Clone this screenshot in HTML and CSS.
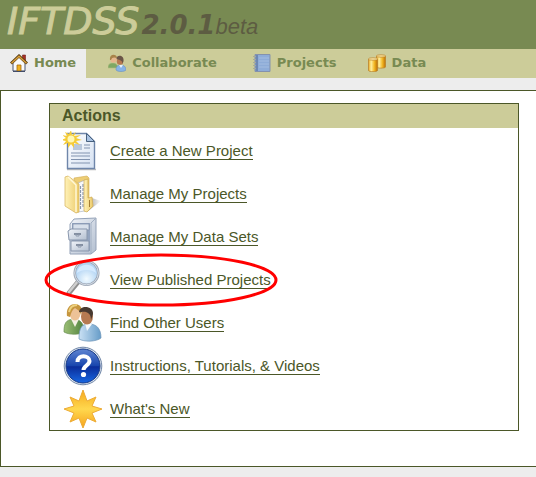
FILE: index.html
```html
<!DOCTYPE html>
<html lang="en">
<head>
<meta charset="utf-8">
<title>IFTDSS - Home</title>
<link rel="stylesheet" href="styles.css">
</head>
<body>
<header class="banner">
  <div class="brand"><span class="name">IFTDSS</span><span class="version">2.0.1</span><span class="stage">beta</span></div>
</header>
<nav class="tabs">
  <a class="tab active" href="#">
    <svg class="tab-icon" viewBox="0 0 18 18" aria-hidden="true">
      <path d="M12.500 1h3v6l-3-3z" fill="#a82f25" stroke="#6e2420" stroke-width=".6"/>
      <path d="M3 8.500 9 3l6 5.500V17H3z" fill="#fafafa" stroke="#4a5470"/>
      <path d="M1 9.500 9 2l8 7.500" fill="none" stroke="#5a3c12" stroke-width="3"/>
      <path d="M1.500 9.300 9 2.300l7.500 7" fill="none" stroke="#d9a13b" stroke-width="1.500"/>
      <path d="M7 11h4v6H7z" fill="#f2b21f" stroke="#a36b10" stroke-width=".8"/>
      <path d="M3 17.400h12" stroke="#39435f"/>
    </svg>Home</a>
  <a class="tab wide" href="#">
    <svg class="tab-icon" viewBox="0 0 18 18" aria-hidden="true">
      <path d="M0 14c0-4 2-5 5-5s5 2 5 5z" fill="#7fa864" stroke="#b1bd80" stroke-width=".6"/>
      <circle cx="5.500" cy="5.500" r="3.200" fill="#e6b68d"/>
      <path d="M2 6c-1-7 7-6 7-2C6 3 4 3 3 6z" fill="#a8834a"/>
      <path d="M8 16c0-4 2-5 5-5s5 2 5 5c-2 2-8 2-10 0z" fill="#86b3e6" stroke="#6c91bd" stroke-width=".6"/>
      <path d="m11 11 2 3 2-3z" fill="#e8f1fb"/>
      <circle cx="12" cy="7.500" r="3.200" fill="#b87950"/>
      <path d="M8.500 5c0-5 8-4 7 2l-1 3c0-3-2-4-6-5z" fill="#6a5547"/>
    </svg>Collaborate</a>
  <a class="tab" href="#">
    <svg class="tab-icon" viewBox="0 0 18 18" aria-hidden="true">
      <path d="M2 .5h15v17H2z" fill="#8eacd8" stroke="#8492ad"/>
      <path d="M2.500 1H5v16H2.500z" fill="#6d87b3"/>
      <path d="M6 4h10M6 7h10M6 10h10M6 13h10" stroke="#a3bce0"/>
      <path d="M0 2.500h3M0 5.500h3M0 8.500h3M0 11.500h3M0 14.500h3" stroke="#a5a99b"/>
    </svg>Projects</a>
  <a class="tab" href="#">
    <svg class="tab-icon" viewBox="0 0 18 18" aria-hidden="true">
      <defs><linearGradient id="gold"><stop offset="0" stop-color="#e8a71f"/><stop offset=".3" stop-color="#fff0a0"/><stop offset=".65" stop-color="#f3b824"/><stop offset="1" stop-color="#bb6e04"/></linearGradient></defs>
      <path d="M8.500 2v11c0 1.500 9 1.500 9 0V2z" fill="url(#gold)" stroke="#b78028" stroke-width=".7"/>
      <ellipse cx="13" cy="2" rx="4.500" ry="1.200" fill="#f8e29a" stroke="#b78028" stroke-width=".7"/>
      <path d="M.5 5v11.500c0 1.500 9 1.500 9 0V5z" fill="url(#gold)" stroke="#b78028" stroke-width=".7"/>
      <ellipse cx="5" cy="5" rx="4.500" ry="1.200" fill="#fbe8a8" stroke="#b78028" stroke-width=".7"/>
    </svg>Data</a>
</nav>
<main class="content">
  <section class="panel">
    <h1 class="panel-title">Actions</h1>
    <ul class="actions">
      <li class="action">
        <svg class="icon" viewBox="0 0 40 40" aria-hidden="true">
          <defs><linearGradient id="paper" x2="1" y2="1"><stop offset="0" stop-color="#fff"/><stop offset="1" stop-color="#d5e1f2"/></linearGradient></defs>
          <path d="M4 38.500h29" stroke="#bbb" stroke-width="1.500"/>
          <path d="M4.500 2.500h19l8 8v27h-27z" fill="url(#paper)" stroke="#6f86aa" stroke-width="1.400"/>
          <path d="M23.500 2.500v8h8z" fill="#a9c2e2" stroke="#47617f"/>
          <path d="M10 13h9v6h-9z" fill="#b9c8dc"/>
          <path d="M21 14h6M21 17h6M8 22h19M8 25h19M8 28.500h19M8 32h19" stroke="#8193af" stroke-width="1.200"/>
          <path d="m8-1 1 5 4-3-2 4 7-1-5 3 6 2-6 1 4 4-6-2 0 5-3-4-3 4 0-5-5 2 3-4-5-1 5-2-4-3 5 1-2-4 4 2z" fill="#f5cc38"/>
          <circle cx="8" cy="8" r="3.500" fill="#fff7b5"/>
        </svg><a href="#">Create a New Project</a></li>
      <li class="action">
        <svg class="icon" viewBox="0 0 40 40" aria-hidden="true">
          <defs><linearGradient id="folder"><stop offset="0" stop-color="#fff2b8"/><stop offset="1" stop-color="#ecca69"/></linearGradient>
          <linearGradient id="shade"><stop offset="0" stop-color="#999"/><stop offset="1" stop-color="#fff"/></linearGradient></defs>
          <path d="M24 38 38 27l-9-3z" fill="url(#shade)"/>
          <path d="m11 4 13-2 2 2v31l-12 2z" fill="#edcd74" stroke="#d0ab55" stroke-width=".6"/>
          <path d="m15 9 7-3v31l-7 1z" fill="#f7f8fb" stroke="#a5adbb" stroke-width=".6"/>
          <path d="M17.500 12v23M20 10v24" stroke="#8b98ac" stroke-width="1.200" stroke-dasharray="3 1"/>
          <path d="m21 6 4-1v19l4-1 1 9-6 6-3-1z" fill="url(#folder)" stroke="#cfaa50" stroke-width=".7"/>
          <path d="M26.500 26v7" stroke="#a57f36"/>
          <path d="m2 3 3-1 11 8v28l-3 1L2 32z" fill="url(#folder)" stroke="#d9b968" stroke-width=".8"/>
          <path d="m5 3 8 8v27" fill="none" stroke="#fff8d8" stroke-width="1.500"/>
        </svg><a href="#">Manage My Projects</a></li>
      <li class="action">
        <svg class="icon" viewBox="0 0 40 40" aria-hidden="true">
          <defs><linearGradient id="steel" x2="1" y2="1"><stop offset="0" stop-color="#f1f4f9"/><stop offset="1" stop-color="#b3bfd0"/></linearGradient></defs>
          <path d="m11 2 22-1v32l-5 4H7V7z" fill="url(#steel)" stroke="#94a2b8"/>
          <path d="M28 6v30M28 6l5-5" stroke="#a1afc2"/>
          <path d="M9 6h18v28H9z" fill="#93a4bf"/>
          <path d="M10 7h16v6H10z" fill="#d8e0eb" stroke="#8191ab" stroke-width=".7"/>
          <path d="m5 14 3-2h16v11H6z" fill="url(#steel)" stroke="#8997ad"/>
          <path d="M8 24h18v10H8z" fill="url(#steel)" stroke="#8997ad"/>
          <path d="M11 17h7M13 28h7" stroke="#69768b" stroke-width="1.500"/>
          <path d="M13 17v2h3v-2M15 28v2h3v-2" fill="none" stroke="#8e9aad"/>
        </svg><a href="#">Manage My Data Sets</a></li>
      <li class="action highlighted">
        <svg class="icon" viewBox="0 0 40 40" aria-hidden="true">
          <defs><radialGradient id="lens" cy=".75"><stop offset="0" stop-color="#f2fbff"/><stop offset="1" stop-color="#b4d5f4"/></radialGradient></defs>
          <path d="M15 22 6 33" stroke="#8f8f8f" stroke-width="5" stroke-linecap="round"/>
          <path d="M15 21 6 32" stroke="#cfcfcf" stroke-width="2.500" stroke-linecap="round"/>
          <circle cx="23.500" cy="13" r="11.800" fill="url(#lens)" stroke="#9da7b5" stroke-width="2.500"/>
          <circle cx="23.500" cy="13" r="11.800" fill="none" stroke="#d6dee8"/>
          <path d="M14 13c1-11 18-11 19 0-5-4-14-4-19 0z" fill="#d4eaff"/>
        </svg><a href="#">View Published Projects</a>
        <svg class="ring" viewBox="0 0 234 54" aria-hidden="true"><ellipse cx="117" cy="27" rx="115" ry="25" fill="none" stroke="#f00" stroke-width="3"/></svg>
      </li>
      <li class="action">
        <svg class="icon" viewBox="0 0 40 40" aria-hidden="true">
          <defs><linearGradient id="green"><stop offset="0" stop-color="#9cbf75"/><stop offset="1" stop-color="#4f813e"/></linearGradient>
          <linearGradient id="blue"><stop offset="0" stop-color="#cae1f4"/><stop offset="1" stop-color="#669cc8"/></linearGradient></defs>
          <path d="M1 29c0-9 2-12 9-13 8 0 11 5 11 13-4 3-15 3-20 0z" fill="url(#green)" stroke="#668d50" stroke-width=".7"/>
          <path d="m8 16 4 8 4-8z" fill="#f4efe2"/>
          <ellipse cx="12" cy="10" rx="5.500" ry="7.500" fill="#edc297"/>
          <path d="M4 13C2-2 19-2 19 8l-1 4c-1-4-3-5-6-7-2 1-4 4-5 9z" fill="#c6963f"/>
          <path d="M6 9c1-5 4-7 8-7" fill="none" stroke="#edd17e" stroke-width="2"/>
          <path d="M16 36c0-12 3-15 10-15s12 4 12 14c-5 4-17 4-22 1z" fill="url(#blue)" stroke="#6b94b7" stroke-width=".7"/>
          <path d="m22 20 2 8 5-7z" fill="#f6fafc"/>
          <ellipse cx="24" cy="13.500" rx="6" ry="8" fill="#b67a52"/>
          <path d="M16 9c1-8 15-6 14 2l-2 6c0-5-2-7-5-8s-6 1-7 0z" fill="#493a31"/>
        </svg><a href="#">Find Other Users</a></li>
      <li class="action">
        <svg class="icon" viewBox="0 0 40 40" aria-hidden="true">
          <defs><linearGradient id="help" x2="0" y2="1"><stop offset="0" stop-color="#5f85d2"/><stop offset=".5" stop-color="#1745ad"/><stop offset=".52" stop-color="#0b2d99"/><stop offset="1" stop-color="#1867e2"/></linearGradient></defs>
          <circle cx="20" cy="20" r="18.800" fill="#dfe6ee" stroke="#7187a8"/>
          <circle cx="20" cy="20" r="17" fill="url(#help)" stroke="#163987"/>
          <path d="M14.500 16c0-8 12-7 12-1 0 4-6 5-6 9" fill="none" stroke="#fff" stroke-width="4"/>
          <circle cx="20.500" cy="28.500" r="2.600" fill="#fff"/>
        </svg><a href="#">Instructions, Tutorials, &amp; Videos</a></li>
      <li class="action">
        <svg class="icon" viewBox="0 0 40 40" aria-hidden="true">
          <defs><linearGradient id="star" x2="0" y2="1"><stop offset="0" stop-color="#f6a91d"/><stop offset=".5" stop-color="#ffd84e"/><stop offset="1" stop-color="#f6a31c"/></linearGradient></defs>
          <path d="m20 1 4 11 9-4-4 9 10 3-10 4 4 9-9-4-4 10-4-10-9 4 4-9-10-4 10-3-4-9 9 4z" fill="url(#star)" stroke="#edab35" stroke-width="1" stroke-linejoin="round"/>
        </svg><a href="#">What's New</a></li>
    </ul>
  </section>
</main>
</body>
</html>
```
FILE: styles.css
```css
* {
  box-sizing: border-box;
}

body {
  margin: 0;
  background: #ededed;
  font-family: "Liberation Sans", Arial, sans-serif;
  color: #4b5728;
}

.banner {
  height: 49px;
  padding-left: 7px;
  background: #788a52;
}

.brand {
  display: flex;
  align-items: baseline;
  line-height: 43px;
  font-style: italic;
  color: #5d5c42;
}

.name {
  font-family: "DejaVu Sans", Verdana, sans-serif;
  font-size: 38px;
  color: #cccc99;
  -webkit-text-stroke: 1px #cccc99;
}

.version {
  padding-left: 2px;
  font-family: "DejaVu Sans", Verdana, sans-serif;
  font-size: 26px;
  font-weight: bold;
}

.stage {
  font-size: 22px;
}

.tabs {
  display: flex;
  height: 29px;
  background: #cccc99;
}

.tab {
  display: flex;
  align-items: center;
  gap: 6px;
  padding: 0 9px 2px 22px;
  font: bold 13px "DejaVu Sans", Verdana, sans-serif;
  color: #788a52;
  text-decoration: none;
}

.tab.active {
  padding-right: 10px;
  padding-left: 10px;
  background: #ededed;
}

.tab.wide {
  padding-right: 14px;
}

.tab-icon {
  width: 18px;
  height: 18px;
}

.content {
  margin-top: 12px;
  padding: 12px 17px 35px 48px;
  background: #fff;
  border: 1px solid #4b5728;
  border-right: 0;
}

.panel {
  border: 1px solid #4b5728;
}

.panel-title {
  margin: 0;
  padding-left: 12px;
  background: #cccc99;
  font-size: 16px;
  line-height: 24px;
}

.actions {
  margin: 0;
  padding: 1px 0 0;
  list-style: none;
}

.action {
  position: relative;
  display: flex;
  align-items: center;
  gap: 7px;
  height: 43px;
  padding-left: 13px;
}

.action a {
  border-bottom: 1px solid #4b5728;
  font-size: 15px;
  line-height: 17px;
  color: inherit;
  text-decoration: none;
}

.icon {
  width: 40px;
  height: 40px;
}

.ring {
  position: absolute;
  top: -5px;
  left: -6px;
  width: 234px;
  height: 54px;
  pointer-events: none;
}
```
